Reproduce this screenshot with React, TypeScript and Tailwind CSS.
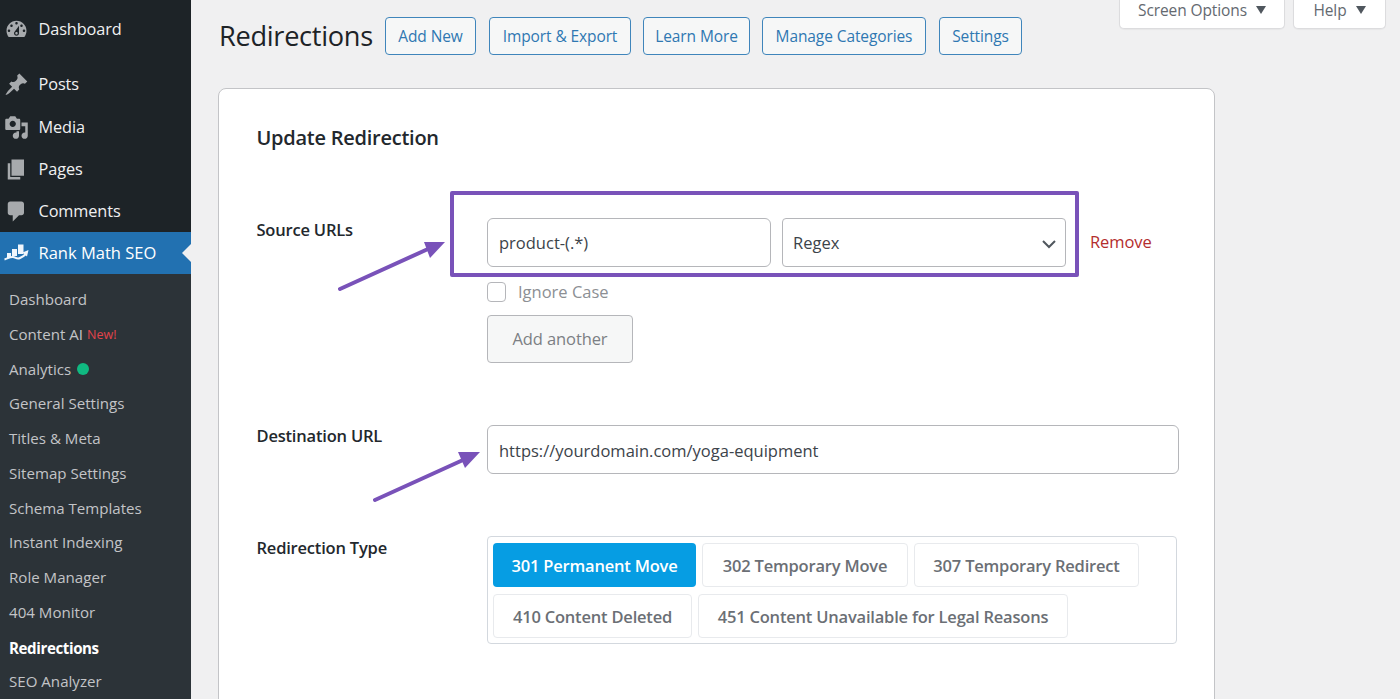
import React from "react";

const Dash = ({ d }: { d: string }) => (
  <svg viewBox="0 0 20 20" className="w-[25px] h-[25px]" fill="currentColor"><path d={d} /></svg>
);
const icons = {
  dashboard: "M3.76 16h12.48c1.1-1.37 1.76-3.11 1.76-5 0-4.42-3.58-8-8-8s-8 3.58-8 8c0 1.89.66 3.63 1.76 5zM10 4c.55 0 1 .45 1 1s-.45 1-1 1-1-.45-1-1 .45-1 1-1zM6 6c.55 0 1 .45 1 1s-.45 1-1 1-1-.45-1-1 .45-1 1-1zm8 0c.55 0 1 .45 1 1s-.45 1-1 1-1-.45-1-1 .45-1 1-1zm-5.37 5.55L12 7v6c0 1.1-.9 2-2 2s-2-.9-2-2c0-.57.24-1.08.63-1.45zM4 10c.55 0 1 .45 1 1s-.45 1-1 1-1-.45-1-1 .45-1 1-1zm12 0c.55 0 1 .45 1 1s-.45 1-1 1-1-.45-1-1 .45-1 1-1zm-5 3c0-.55-.45-1-1-1s-1 .45-1 1 .45 1 1 1 1-.45 1-1z",
  post: "M10.44 3.02l1.82-1.82 6.36 6.35-1.83 1.82c-1.05-.68-2.48-.57-3.41.36l-.75.75c-.92.93-1.04 2.35-.35 3.41l-1.83 1.82-2.41-2.41-2.8 2.79c-.42.42-3.38 2.71-3.8 2.29s1.86-3.39 2.28-3.81l2.79-2.79L4.1 9.36l1.83-1.82c1.05.69 2.48.57 3.4-.36l.75-.75c.93-.92 1.05-2.35.36-3.41z",
  media: "M13 11V4c0-.55-.45-1-1-1h-1.67L9 1H5L3.67 3H2c-.55 0-1 .45-1 1v7c0 .55.45 1 1 1h10c.55 0 1-.45 1-1zM7 4.5c1.38 0 2.5 1.12 2.5 2.5S8.38 9.5 7 9.5 4.5 8.38 4.5 7 5.62 4.5 7 4.5zM14 6h5v10.5c0 1.38-1.12 2.5-2.5 2.5S14 17.88 14 16.5s1.12-2.5 2.5-2.5c.17 0 .34.02.5.05V9h-3V6zm-4 8.05V13h2v3.5c0 1.38-1.12 2.5-2.5 2.5S7 17.88 7 16.5 8.12 14 9.5 14c.17 0 .34.02.5.05z",
  page: "M6 15V2h10v13H6zm-1 1h8v2H3V5h2v11z",
  comment: "M5 2h9c1.1 0 2 .9 2 2v7c0 1.1-.9 2-2 2h-2l-5 5v-5H5c-1.1 0-2-.9-2-2V4c0-1.1.9-2 2-2z",
};

const TopItem = ({ icon, label, className }: { icon: string; label: string; className: string }) => (
  <div className={`flex items-center text-[#f0f0f1] ${className}`}>
    <div className="w-[38.500px] pl-[4px] text-[#a7aaad] shrink-0"><Dash d={icon} /></div>
    <span>{label}</span>
  </div>
);

const subs = ["General Settings", "Titles & Meta", "Sitemap Settings", "Schema Templates", "Instant Indexing", "Role Manager", "404 Monitor"];

const Sidebar = () => (
  <aside className="w-[191px] shrink-0 bg-[#1d2327] h-[699px] overflow-hidden text-[16.300px] tracking-[-0.1px]">
    <TopItem icon={icons.dashboard} label="Dashboard" className="h-[42px] mt-[8px] mb-[13px]" />
    <TopItem icon={icons.post} label="Posts" className="h-[43px]" />
    <TopItem icon={icons.media} label="Media" className="h-[42px]" />
    <TopItem icon={icons.page} label="Pages" className="h-[42px]" />
    <TopItem icon={icons.comment} label="Comments" className="h-[42px]" />
    <div className="relative flex items-center h-[42px] bg-[#2271b1] text-white text-[16.500px] tracking-normal">
      <div className="w-[38.500px] pl-[4px] shrink-0">
        <svg viewBox="0 0 25 20" className="w-[25px] h-[20px]" fill="#f0f6fc">
          <path d="M3 10h4v5H3zM8 6h5v7H8zM14 1.500h5.500V11H14z" />
          <path d="M0.500 16.500C4 15.500 6 13.500 9 14S13 16.500 16 15S20 13 22 11" fill="none" stroke="#f0f6fc" strokeWidth="2" />
          <polygon points="24.500,7 18.500,9.500 23,13.500" />
        </svg>
      </div>
      <span>Rank Math SEO</span>
      <div className="absolute right-0 top-[12px] w-0 h-0 border-y-[9px] border-y-transparent border-r-[9px] border-r-[#f0f0f1]" />
    </div>
    <div className="bg-[#2c3338] h-[425px] pt-[8px] pl-[9px] text-[15.100px] tracking-normal text-[#c3c4c7]">
      <div className="h-[34.750px] flex items-center">Dashboard</div>
      <div className="h-[34.750px] flex items-center">Content AI<span className="ml-[4px] text-[12.500px] text-[#e2434b] mt-[3px]">New!</span></div>
      <div className="h-[34.750px] flex items-center">Analytics<span className="ml-[6px] w-[12px] h-[12px] rounded-full bg-[#10b981]" /></div>
      {subs.map((s) => <div key={s} className="h-[34.750px] flex items-center">{s}</div>)}
      <div className="h-[34.750px] flex items-center pt-[2px] font-bold text-white tracking-[-0.4px]">Redirections</div>
      <div className="h-[34.750px] flex items-center">SEO Analyzer</div>
    </div>
  </aside>
);

const HeadBtn = ({ children, className }: { children: React.ReactNode; className: string }) => (
  <button className={`h-[38px] pt-[1px] rounded-[4px] border border-[#3f85bb] bg-[#f6f7f7] text-[#2f78b2] text-[15.500px] tracking-[-0.1px] ${className}`}>{children}</button>
);

const MetaTab = ({ label, w }: { label: string; w: string }) => (
  <div className={`${w} h-[29px] flex items-center justify-center gap-[9px] bg-white border border-t-0 border-[#dcdcde] rounded-b-[5px] text-[#646970] text-[15.500px] tracking-[-0.1px] pb-[6px] shadow-[0_1px_1px_rgba(0,0,0,0.04)]`}>
    <span>{label}</span>
    <span className="w-0 h-0 border-x-[5.500px] border-x-transparent border-t-[8px] border-t-[#50575e] -mt-[2px]" />
  </div>
);

const inputCls = "h-[49px] rounded-[6px] border border-[#b5b6ba] bg-white flex items-center px-[11px] text-[16.500px] text-[#3c434a]";

const TypeBtn = ({ label, active, w }: { label: string; active?: boolean; w: string }) => (
  <div className={`${w} h-[44px] pt-[2px] rounded-[4px] flex items-center justify-center text-[16.500px] font-semibold tracking-[-0.2px] ${active ? "bg-[#069de3] text-white" : "bg-white border border-[#e8eaed] text-[#6b6f75]"}`}>{label}</div>
);

const Label = ({ children, className }: { children: React.ReactNode; className?: string }) => (
  <div className={`w-[230.500px] shrink-0 text-[16.500px] font-semibold text-[#23282d] tracking-[-0.2px] ${className ?? ""}`}>{children}</div>
);

const Arrow = ({ className, head }: { className: string; head: string }) => (
  <svg className={className} viewBox="0 0 110 54" fill="#7952b9">
    <line x1={2} y1={50} x2={90} y2={10} stroke="#7952b9" strokeWidth="4" strokeLinecap="round" />
    <polygon points={head} />
  </svg>
);

export default function App() {
  return (
    <div className="flex w-[1400px] h-[699px] overflow-hidden bg-[#f0f0f1] font-['Open_Sans','Noto_Sans',sans-serif]">
      <Sidebar />
      <main className="flex-1 pl-[28px] pr-[14px] min-w-0">
        <div className="flex justify-between items-start">
          <div className="flex items-start pt-[17px]">
            <h1 className="text-[27.200px] leading-[38px] text-[#1d2327] tracking-[-0.3px] w-[166px]">Redirections</h1>
            <HeadBtn className="w-[91px]">Add New</HeadBtn>
            <HeadBtn className="w-[142px] ml-[13px]">Import &amp; Export</HeadBtn>
            <HeadBtn className="w-[107px] ml-[12px]">Learn More</HeadBtn>
            <HeadBtn className="w-[164px] ml-[12px]">Manage Categories</HeadBtn>
            <HeadBtn className="w-[83px] ml-[13px]">Settings</HeadBtn>
          </div>
          <div className="flex gap-[8px]">
            <MetaTab label="Screen Options" w="w-[166px]" />
            <MetaTab label="Help" w="w-[93px]" />
          </div>
        </div>
        <section className="relative mt-[33px] -ml-[1px] w-[997px] h-[640px] bg-white border border-[#c3c4c7] rounded-[8px] pl-[37.500px] pt-[34px]">
          <h2 className="text-[20px] leading-[30px] font-semibold text-[#23282d] tracking-[-0.25px]">Update Redirection</h2>

          <div className="flex mt-[66px]">
            <Label className="leading-[22px]">Source URLs</Label>
            <div className="-mt-[1px]">
              <div className="flex items-center">
                <div className={`${inputCls} w-[284px] pt-[2px]`}>product-(.*)</div>
                <div className={`${inputCls} w-[284px] ml-[11px] justify-between !rounded-[4px] pl-[10px] pr-[9px] pt-[2px]`}>
                  <span>Regex</span>
                  <svg viewBox="0 0 14 10" className="w-[14px] h-[10px]" fill="none" stroke="#50575e" strokeWidth="2"><path d="M1 2l6 6 6-6" /></svg>
                </div>
                <span className="ml-[24px] text-[16.500px] text-[#b32d2e] -mt-[1px] tracking-[-0.1px]">Remove</span>
              </div>
              <div className="flex items-center mt-[15px] h-[20px]">
                <span className="w-[19px] h-[20px] border border-[#b5b6ba] rounded-[4px] bg-white" />
                <span className="ml-[12px] text-[16.500px] text-[#8c8f94]">Ignore Case</span>
              </div>
              <button className="mt-[13px] w-[146px] h-[48px] rounded-[4px] border border-[#b5b6ba] bg-[#f6f7f7] text-[#7c7f84] text-[16.500px] tracking-[-0.1px]">Add another</button>
            </div>
          </div>

          <div className="flex mt-[63px]">
            <Label className="leading-[24px] -mt-[2px]">Destination URL</Label>
            <div className={`${inputCls} w-[692px] -mt-[1px] pt-[3px]`}>https://yourdomain.com/yoga-equipment</div>
          </div>

          <div className="flex mt-[62px]">
            <Label className="leading-[24px]">Redirection Type</Label>
            <div className="w-[690px] h-[108px] border border-[#d3d8de] rounded-[4px] pl-[5px] pt-[6px] flex flex-col gap-[7px]">
              <div className="flex gap-[6px]">
                <TypeBtn label="301 Permanent Move" active w="w-[203px]" />
                <TypeBtn label="302 Temporary Move" w="w-[206px]" />
                <TypeBtn label="307 Temporary Redirect" w="w-[225px]" />
              </div>
              <div className="flex gap-[6px]">
                <TypeBtn label="410 Content Deleted" w="w-[199px]" />
                <TypeBtn label="451 Content Unavailable for Legal Reasons" w="w-[370px]" />
              </div>
            </div>
          </div>

          <div className="absolute left-[231px] top-[102px] w-[629px] h-[86px] border-[4px] border-[#7952b9] rounded-[2px]" />
          <Arrow className="absolute left-[119px] top-[150px] w-[110px] h-[54px]" head="107,3 86,3 92,19" />
          <Arrow className="absolute left-[154px] top-[361px] w-[110px] h-[54px]" head="107,2 85,2 92,18" />
        </section>
      </main>
    </div>
  );
}
